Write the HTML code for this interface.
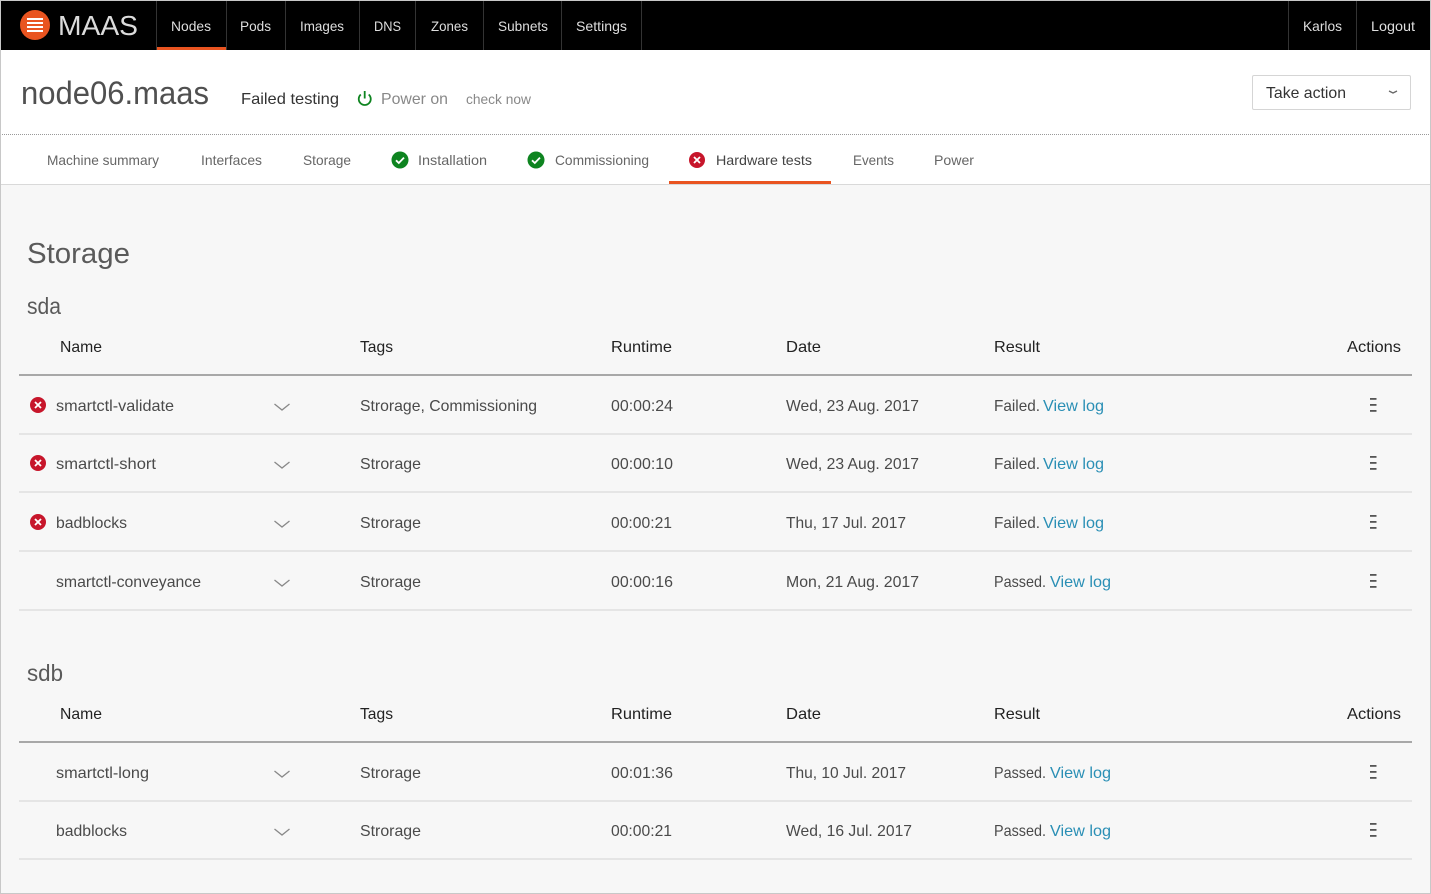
<!DOCTYPE html>
<html lang="en">
<head>
<meta charset="utf-8">
<title>node06.maas | MAAS</title>
<style>
html,body{margin:0;padding:0;width:1431px;height:894px;overflow:hidden;background:#f7f7f7}
svg{display:block;font-family:"Liberation Sans",sans-serif}
text{white-space:pre}
.n{font-size:14px;fill:#dedede}
.t{font-size:14px;fill:#666}
.h{font-size:16px;fill:#222}
.c{font-size:16px;fill:#4a4a4a}
.l{font-size:16px;fill:#2a8fb5}
</style>
</head>
<body>
<svg width="1431" height="894" viewBox="0 0 1431 894" xmlns="http://www.w3.org/2000/svg">
<defs>
<g id="x"><circle r="8" fill="#c7162b"/><path d="M-3-3 3 3M3-3-3 3" stroke="#fff" stroke-width="1.8" fill="none"/></g>
<g id="k"><circle r="8.500" fill="#0e8420"/><path d="M-4 .3-1.200 3 4-2.400" stroke="#fff" stroke-width="1.800" fill="none"/></g>
<path id="d" d="M-7.500-3 0 3 7.500-3" stroke="#888" stroke-width="1.300" fill="none"/>
<g id="m" fill="#555"><rect x="-3" y="-7" width="6.500" height="1.800"/><rect x="-3" y="-1" width="6.500" height="1.800"/><rect x="-3" y="5" width="6.500" height="1.800"/></g>
</defs>

<!-- page background -->
<rect width="1431" height="894" fill="#f7f7f7"/>
<rect y="50" width="1431" height="134" fill="#fff"/>
<rect y="184" width="1431" height="1" fill="#d9d9d9"/>
<path d="M0 134.500H1431" stroke="#999" stroke-width="1" stroke-dasharray="1 1"/>

<!-- top navigation -->
<rect x="0" y="1" width="1431" height="49" fill="#000"/>
<g fill="#333">
<rect x="156" y="1" width="1" height="49"/><rect x="226" y="1" width="1" height="49"/><rect x="285" y="1" width="1" height="49"/>
<rect x="359" y="1" width="1" height="49"/><rect x="415" y="1" width="1" height="49"/><rect x="483" y="1" width="1" height="49"/>
<rect x="561" y="1" width="1" height="49"/><rect x="641" y="1" width="1" height="49"/><rect x="1288" y="1" width="1" height="49"/>
<rect x="1356" y="1" width="1" height="49"/>
</g>
<rect x="157" y="47" width="69" height="3" fill="#e95420"/>
<circle cx="35" cy="25" r="15" fill="#e95420"/>
<g fill="#fff"><rect x="27" y="18" width="16" height="2"/><rect x="27" y="22" width="16" height="2"/><rect x="27" y="26" width="16" height="2"/><rect x="27" y="30" width="16" height="2"/></g>
<text x="58" y="35" font-size="28" fill="#dcdcdc" textLength="80" lengthAdjust="spacingAndGlyphs">MAAS</text>
<text class="n" x="171" y="31" textLength="40" lengthAdjust="spacingAndGlyphs">Nodes</text>
<text class="n" x="240" y="31" textLength="31" lengthAdjust="spacingAndGlyphs">Pods</text>
<text class="n" x="300" y="31" textLength="44" lengthAdjust="spacingAndGlyphs">Images</text>
<text class="n" x="374" y="31" textLength="27" lengthAdjust="spacingAndGlyphs">DNS</text>
<text class="n" x="431" y="31" textLength="37" lengthAdjust="spacingAndGlyphs">Zones</text>
<text class="n" x="498" y="31" textLength="50" lengthAdjust="spacingAndGlyphs">Subnets</text>
<text class="n" x="576" y="31" textLength="51" lengthAdjust="spacingAndGlyphs">Settings</text>
<text class="n" x="1303" y="31" textLength="39" lengthAdjust="spacingAndGlyphs">Karlos</text>
<text class="n" x="1371" y="31" textLength="44" lengthAdjust="spacingAndGlyphs">Logout</text>

<!-- node header -->
<text x="21" y="104" font-size="32" fill="#505050" textLength="188" lengthAdjust="spacingAndGlyphs">node06.maas</text>
<text x="241" y="104" font-size="16" fill="#333" textLength="98" lengthAdjust="spacingAndGlyphs">Failed testing</text>
<path d="M360.800 94.500A6 6 0 1 0 368.700 94.500M364.700 91V98.500" stroke="#0e8420" stroke-width="1.800" fill="none"/>
<text x="381" y="104" font-size="16" fill="#888" textLength="67" lengthAdjust="spacingAndGlyphs">Power on</text>
<text x="466" y="104" font-size="14" fill="#888" textLength="65" lengthAdjust="spacingAndGlyphs">check now</text>
<rect x="1252.500" y="75.500" width="158" height="34" rx="1.500" fill="#fff" stroke="#d5d5d5"/>
<text x="1266" y="98" font-size="16" fill="#333" textLength="80" lengthAdjust="spacingAndGlyphs">Take action</text>
<path d="M1389 91 1393 93 1397 91" stroke="#666" stroke-width="1.300" fill="none"/>

<!-- machine tabs -->
<text class="t" x="47" y="165" textLength="112" lengthAdjust="spacingAndGlyphs">Machine summary</text>
<text class="t" x="201" y="165" textLength="61" lengthAdjust="spacingAndGlyphs">Interfaces</text>
<text class="t" x="303" y="165" textLength="48" lengthAdjust="spacingAndGlyphs">Storage</text>
<use href="#k" x="400" y="160"/>
<text class="t" x="418" y="165" textLength="69" lengthAdjust="spacingAndGlyphs">Installation</text>
<use href="#k" x="536" y="160"/>
<text class="t" x="555" y="165" textLength="94" lengthAdjust="spacingAndGlyphs">Commissioning</text>
<use href="#x" x="697" y="160"/>
<text x="716" y="165" font-size="14" fill="#444" textLength="96" lengthAdjust="spacingAndGlyphs">Hardware tests</text>
<rect x="669" y="181" width="162" height="3" fill="#e95420"/>
<text class="t" x="853" y="165" textLength="41" lengthAdjust="spacingAndGlyphs">Events</text>
<text class="t" x="934" y="165" textLength="40" lengthAdjust="spacingAndGlyphs">Power</text>

<!-- Storage -->
<text x="27" y="263" font-size="29" fill="#5a5a5a" textLength="103" lengthAdjust="spacingAndGlyphs">Storage</text>
<text x="27" y="314" font-size="23" fill="#5a5a5a" textLength="34" lengthAdjust="spacingAndGlyphs">sda</text>

<text class="h" x="60" y="352" textLength="42" lengthAdjust="spacingAndGlyphs">Name</text>
<text class="h" x="360" y="352" textLength="33" lengthAdjust="spacingAndGlyphs">Tags</text>
<text class="h" x="611" y="352" textLength="61" lengthAdjust="spacingAndGlyphs">Runtime</text>
<text class="h" x="786" y="352" textLength="35" lengthAdjust="spacingAndGlyphs">Date</text>
<text class="h" x="994" y="352" textLength="46" lengthAdjust="spacingAndGlyphs">Result</text>
<text class="h" x="1347" y="352" textLength="54" lengthAdjust="spacingAndGlyphs">Actions</text>
<rect x="19" y="374" width="1393" height="2" fill="#a8a8a8"/>

<use href="#x" x="38" y="405"/>
<text class="c" x="56" y="411" textLength="118" lengthAdjust="spacingAndGlyphs">smartctl-validate</text>
<use href="#d" x="282" y="407"/>
<text class="c" x="360" y="411" textLength="177" lengthAdjust="spacingAndGlyphs">Strorage, Commissioning</text>
<text class="c" x="611" y="411" textLength="62" lengthAdjust="spacingAndGlyphs">00:00:24</text>
<text class="c" x="786" y="411" textLength="133" lengthAdjust="spacingAndGlyphs">Wed, 23 Aug. 2017</text>
<text class="c" x="994" y="411" textLength="46" lengthAdjust="spacingAndGlyphs">Failed.</text>
<text class="l" x="1043" y="411" textLength="61" lengthAdjust="spacingAndGlyphs">View log</text>
<use href="#m" x="1373" y="405"/>
<rect x="19" y="433" width="1393" height="2" fill="#e5e5e5"/>

<use href="#x" x="38" y="463"/>
<text class="c" x="56" y="469" textLength="100" lengthAdjust="spacingAndGlyphs">smartctl-short</text>
<use href="#d" x="282" y="465"/>
<text class="c" x="360" y="469" textLength="61" lengthAdjust="spacingAndGlyphs">Strorage</text>
<text class="c" x="611" y="469" textLength="62" lengthAdjust="spacingAndGlyphs">00:00:10</text>
<text class="c" x="786" y="469" textLength="133" lengthAdjust="spacingAndGlyphs">Wed, 23 Aug. 2017</text>
<text class="c" x="994" y="469" textLength="46" lengthAdjust="spacingAndGlyphs">Failed.</text>
<text class="l" x="1043" y="469" textLength="61" lengthAdjust="spacingAndGlyphs">View log</text>
<use href="#m" x="1373" y="463"/>
<rect x="19" y="491" width="1393" height="2" fill="#e5e5e5"/>

<use href="#x" x="38" y="522"/>
<text class="c" x="56" y="528" textLength="71" lengthAdjust="spacingAndGlyphs">badblocks</text>
<use href="#d" x="282" y="524"/>
<text class="c" x="360" y="528" textLength="61" lengthAdjust="spacingAndGlyphs">Strorage</text>
<text class="c" x="611" y="528" textLength="61" lengthAdjust="spacingAndGlyphs">00:00:21</text>
<text class="c" x="786" y="528" textLength="120" lengthAdjust="spacingAndGlyphs">Thu, 17 Jul. 2017</text>
<text class="c" x="994" y="528" textLength="46" lengthAdjust="spacingAndGlyphs">Failed.</text>
<text class="l" x="1043" y="528" textLength="61" lengthAdjust="spacingAndGlyphs">View log</text>
<use href="#m" x="1373" y="522"/>
<rect x="19" y="550" width="1393" height="2" fill="#e5e5e5"/>

<text class="c" x="56" y="587" textLength="145" lengthAdjust="spacingAndGlyphs">smartctl-conveyance</text>
<use href="#d" x="282" y="583"/>
<text class="c" x="360" y="587" textLength="61" lengthAdjust="spacingAndGlyphs">Strorage</text>
<text class="c" x="611" y="587" textLength="62" lengthAdjust="spacingAndGlyphs">00:00:16</text>
<text class="c" x="786" y="587" textLength="133" lengthAdjust="spacingAndGlyphs">Mon, 21 Aug. 2017</text>
<text class="c" x="994" y="587" textLength="52" lengthAdjust="spacingAndGlyphs">Passed.</text>
<text class="l" x="1050" y="587" textLength="61" lengthAdjust="spacingAndGlyphs">View log</text>
<use href="#m" x="1373" y="581"/>
<rect x="19" y="609" width="1393" height="2" fill="#e5e5e5"/>

<!-- sdb -->
<text x="27" y="681" font-size="23" fill="#5a5a5a" textLength="36" lengthAdjust="spacingAndGlyphs">sdb</text>
<text class="h" x="60" y="719" textLength="42" lengthAdjust="spacingAndGlyphs">Name</text>
<text class="h" x="360" y="719" textLength="33" lengthAdjust="spacingAndGlyphs">Tags</text>
<text class="h" x="611" y="719" textLength="61" lengthAdjust="spacingAndGlyphs">Runtime</text>
<text class="h" x="786" y="719" textLength="35" lengthAdjust="spacingAndGlyphs">Date</text>
<text class="h" x="994" y="719" textLength="46" lengthAdjust="spacingAndGlyphs">Result</text>
<text class="h" x="1347" y="719" textLength="54" lengthAdjust="spacingAndGlyphs">Actions</text>
<rect x="19" y="741" width="1393" height="2" fill="#a8a8a8"/>

<text class="c" x="56" y="778" textLength="93" lengthAdjust="spacingAndGlyphs">smartctl-long</text>
<use href="#d" x="282" y="774"/>
<text class="c" x="360" y="778" textLength="61" lengthAdjust="spacingAndGlyphs">Strorage</text>
<text class="c" x="611" y="778" textLength="62" lengthAdjust="spacingAndGlyphs">00:01:36</text>
<text class="c" x="786" y="778" textLength="120" lengthAdjust="spacingAndGlyphs">Thu, 10 Jul. 2017</text>
<text class="c" x="994" y="778" textLength="52" lengthAdjust="spacingAndGlyphs">Passed.</text>
<text class="l" x="1050" y="778" textLength="61" lengthAdjust="spacingAndGlyphs">View log</text>
<use href="#m" x="1373" y="772"/>
<rect x="19" y="800" width="1393" height="2" fill="#e5e5e5"/>

<text class="c" x="56" y="836" textLength="71" lengthAdjust="spacingAndGlyphs">badblocks</text>
<use href="#d" x="282" y="832"/>
<text class="c" x="360" y="836" textLength="61" lengthAdjust="spacingAndGlyphs">Strorage</text>
<text class="c" x="611" y="836" textLength="61" lengthAdjust="spacingAndGlyphs">00:00:21</text>
<text class="c" x="786" y="836" textLength="126" lengthAdjust="spacingAndGlyphs">Wed, 16 Jul. 2017</text>
<text class="c" x="994" y="836" textLength="52" lengthAdjust="spacingAndGlyphs">Passed.</text>
<text class="l" x="1050" y="836" textLength="61" lengthAdjust="spacingAndGlyphs">View log</text>
<use href="#m" x="1373" y="830"/>
<rect x="19" y="858" width="1393" height="2" fill="#e5e5e5"/>

<!-- outer frame -->
<rect x="0" y="0" width="1431" height="1" fill="#c8c8c8"/>
<rect x="0" y="0" width="1" height="894" fill="#c8c8c8"/>
<rect x="1430" y="0" width="1" height="894" fill="#c8c8c8"/>
<rect x="0" y="893" width="1431" height="1" fill="#c8c8c8"/>
</svg>
</body>
</html>
